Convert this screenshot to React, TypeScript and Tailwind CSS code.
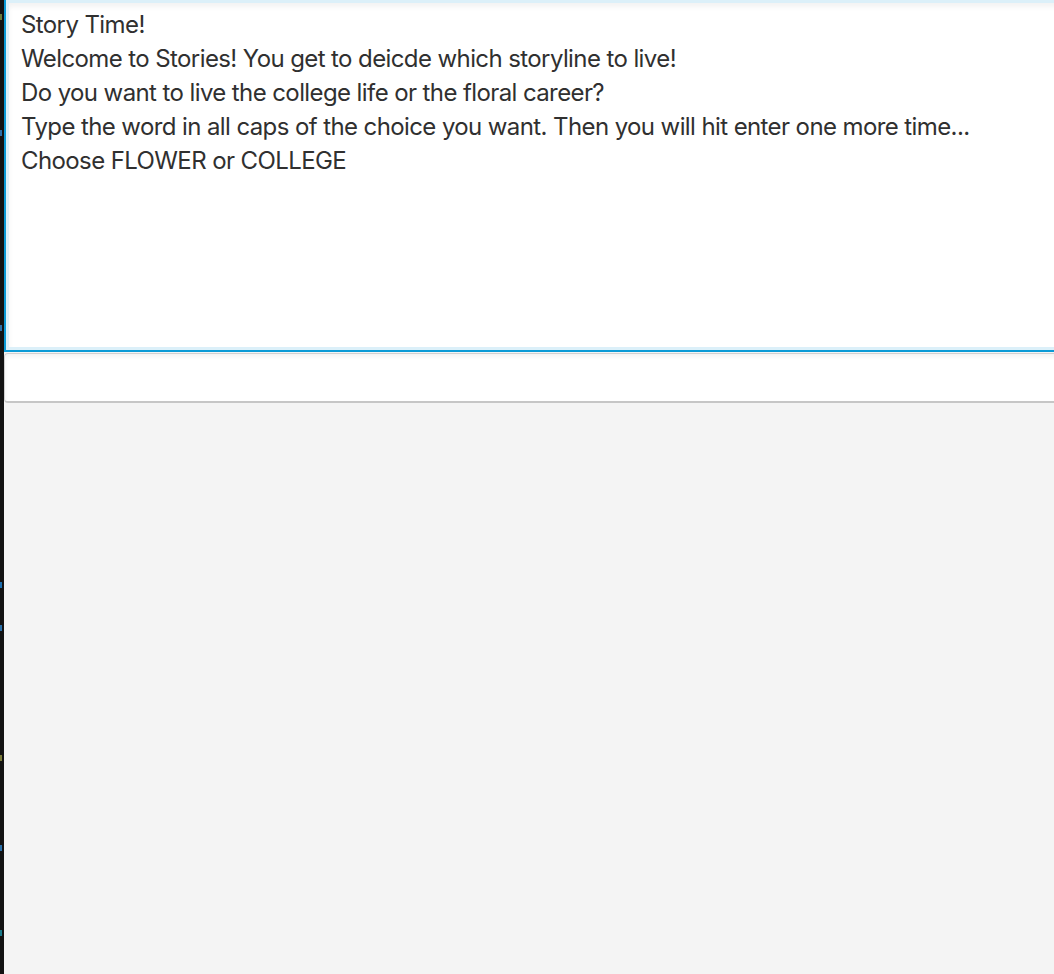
const lines = [
  "Story Time!",
  "Welcome to Stories! You get to deicde which storyline to live!",
  "Do you want to live the college life or the floral career?",
  "Type the word in all caps of the choice you want. Then you will hit enter one more time...",
  "Choose FLOWER or COLLEGE",
];

// dots of the editor peeking out behind the window
const edgeDots = [
  { top: 14, color: "#6a7a3a" },
  { top: 130, color: "#2a6fa8" },
  { top: 325, color: "#2a6fa8" },
  { top: 582, color: "#1d6fb0" },
  { top: 625, color: "#2a6fa8" },
  { top: 755, color: "#7a7a3a" },
  { top: 845, color: "#2a6fa8" },
  { top: 930, color: "#1a7a8a" },
];

export default function App() {
  return (
    <div className="flex h-[974px] w-[1054px] overflow-hidden bg-[#f4f4f4]">
      {/* editor strip on the left */}
      <div className="relative w-[4px] shrink-0 bg-[#121212]">
        {edgeDots.map((d) => (
          <div
            key={d.top}
            className="absolute left-0 h-[6px] w-[2px]"
            style={{ top: d.top, backgroundColor: d.color }}
          />
        ))}
      </div>

      <div className="-mr-[12px] flex min-w-0 flex-1 flex-col">
        {/* story text area (focused) */}
        <div className="-mt-[2px] h-[354px] shrink-0 border-2 border-[#0a9ad6] bg-[#dcf0f9] p-[3px]">
          <div className="h-full bg-white pl-[12px] pt-[5px] shadow-[inset_0_4px_5px_rgba(0,0,0,0.05)]">
            {lines.map((l) => (
              <div
                key={l}
                className="h-[34px] whitespace-nowrap font-['Inter',sans-serif] text-[24px] leading-[34px] tracking-[-0.6px] text-[#303030]"
              >
                {l}
              </div>
            ))}
          </div>
        </div>

        {/* input field */}
        <div className="mt-[1px] h-[50px] shrink-0 rounded-[4px] border border-b-2 border-[#d0d0d0] border-b-[#c6c6c6] bg-white shadow-[inset_0_3px_4px_rgba(0,0,0,0.05)]" />
      </div>
    </div>
  );
}
